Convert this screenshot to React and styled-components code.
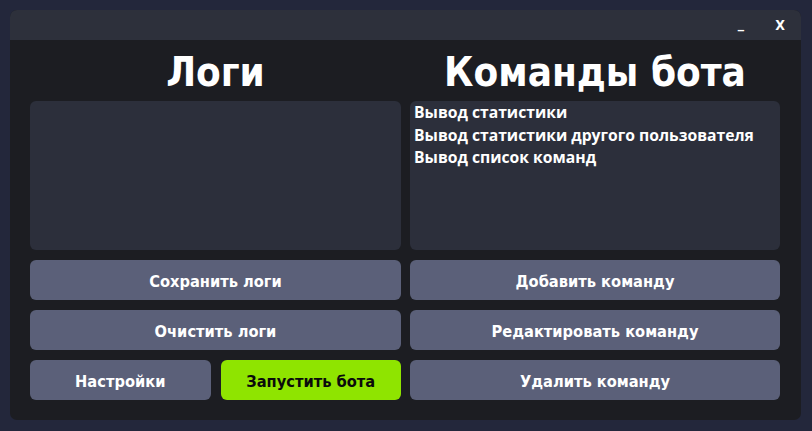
import React from "react";
import styled, { createGlobalStyle } from "styled-components";

const Global = createGlobalStyle`
  html, body { margin: 0; padding: 0; background: #23273b; }
  body { width: 812px; height: 431px; overflow: hidden; }
`;

const Page = styled.div`
  width: 812px;
  height: 431px;
  box-sizing: border-box;
  padding: 10px 11px 11px 10px;
  background: #23273b;
`;

const Window = styled.div`
  height: 100%;
  border-radius: 7px;
  overflow: hidden;
  background: #1c1d22;
  display: flex;
  flex-direction: column;
`;

const TitleBar = styled.div`
  height: 30px;
  background: #2d303b;
  display: flex;
  align-items: center;
  justify-content: flex-end;
  padding-right: 16px;
  gap: 29px;
  font-family: "DejaVu Sans Condensed", "DejaVu Sans", sans-serif;
  font-weight: bold;
  font-size: 14px;
  color: #fff;
`;

const TitleBtn = styled.span`
  display: inline-block;
  width: 10px;
  text-align: center;
  transform: translateY(${(p) => p.$dy || 0}px);
`;

const Body = styled.div`
  flex: 1;
  display: grid;
  grid-template-columns: 371px 370px;
  column-gap: 9px;
  padding: 0 20px 20px 20px;
`;

const Column = styled.div`
  display: flex;
  flex-direction: column;
`;

const Heading = styled.h1`
  margin: 0;
  height: 61px;
  display: flex;
  align-items: center;
  justify-content: center;
  font-family: "DejaVu Sans Condensed", "DejaVu Sans", sans-serif;
  font-weight: bold;
  font-size: 40px;
  color: #fff;
  padding-top: 2px;
  box-sizing: border-box;
`;

const Box = styled.div`
  height: 149px;
  background: #2c2f3b;
  border-radius: 6px;
  padding: 0 4px;
  box-sizing: border-box;
  font-family: "Open Sans", "Noto Sans", sans-serif;
  font-weight: bold;
  font-size: 15.7px;
  line-height: 22.5px;
  color: #fff;
`;

const Buttons = styled.div`
  margin-top: 10px;
  display: grid;
  grid-template-columns: 1fr 1fr;
  gap: 10px;
`;

const Button = styled.button`
  grid-column: ${(p) => (p.$half ? "auto" : "1 / -1")};
  height: 40px;
  border: none;
  border-radius: 6px;
  background: ${(p) => (p.$green ? "#8fe400" : "#5b6079")};
  color: ${(p) => (p.$green ? "#0b0b0b" : "#fff")};
  font-family: "DejaVu Sans Condensed", "DejaVu Sans", sans-serif;
  font-weight: bold;
  font-size: 16.3px;
  padding: 3px 0 0 0;
`;

export default function App() {
  return (
    <>
      <Global />
      <Page>
        <Window>
          <TitleBar>
            <TitleBtn $dy={-2}>_</TitleBtn>
            <TitleBtn>X</TitleBtn>
          </TitleBar>
          <Body>
            <Column>
              <Heading>Логи</Heading>
              <Box />
              <Buttons>
                <Button>Сохранить логи</Button>
                <Button>Очистить логи</Button>
                <Button $half>Настройки</Button>
                <Button $half $green>Запустить бота</Button>
              </Buttons>
            </Column>
            <Column>
              <Heading>Команды бота</Heading>
              <Box>
                <div>Вывод статистики</div>
                <div>Вывод статистики другого пользователя</div>
                <div>Вывод список команд</div>
              </Box>
              <Buttons>
                <Button>Добавить команду</Button>
                <Button>Редактировать команду</Button>
                <Button>Удалить команду</Button>
              </Buttons>
            </Column>
          </Body>
        </Window>
      </Page>
    </>
  );
}
